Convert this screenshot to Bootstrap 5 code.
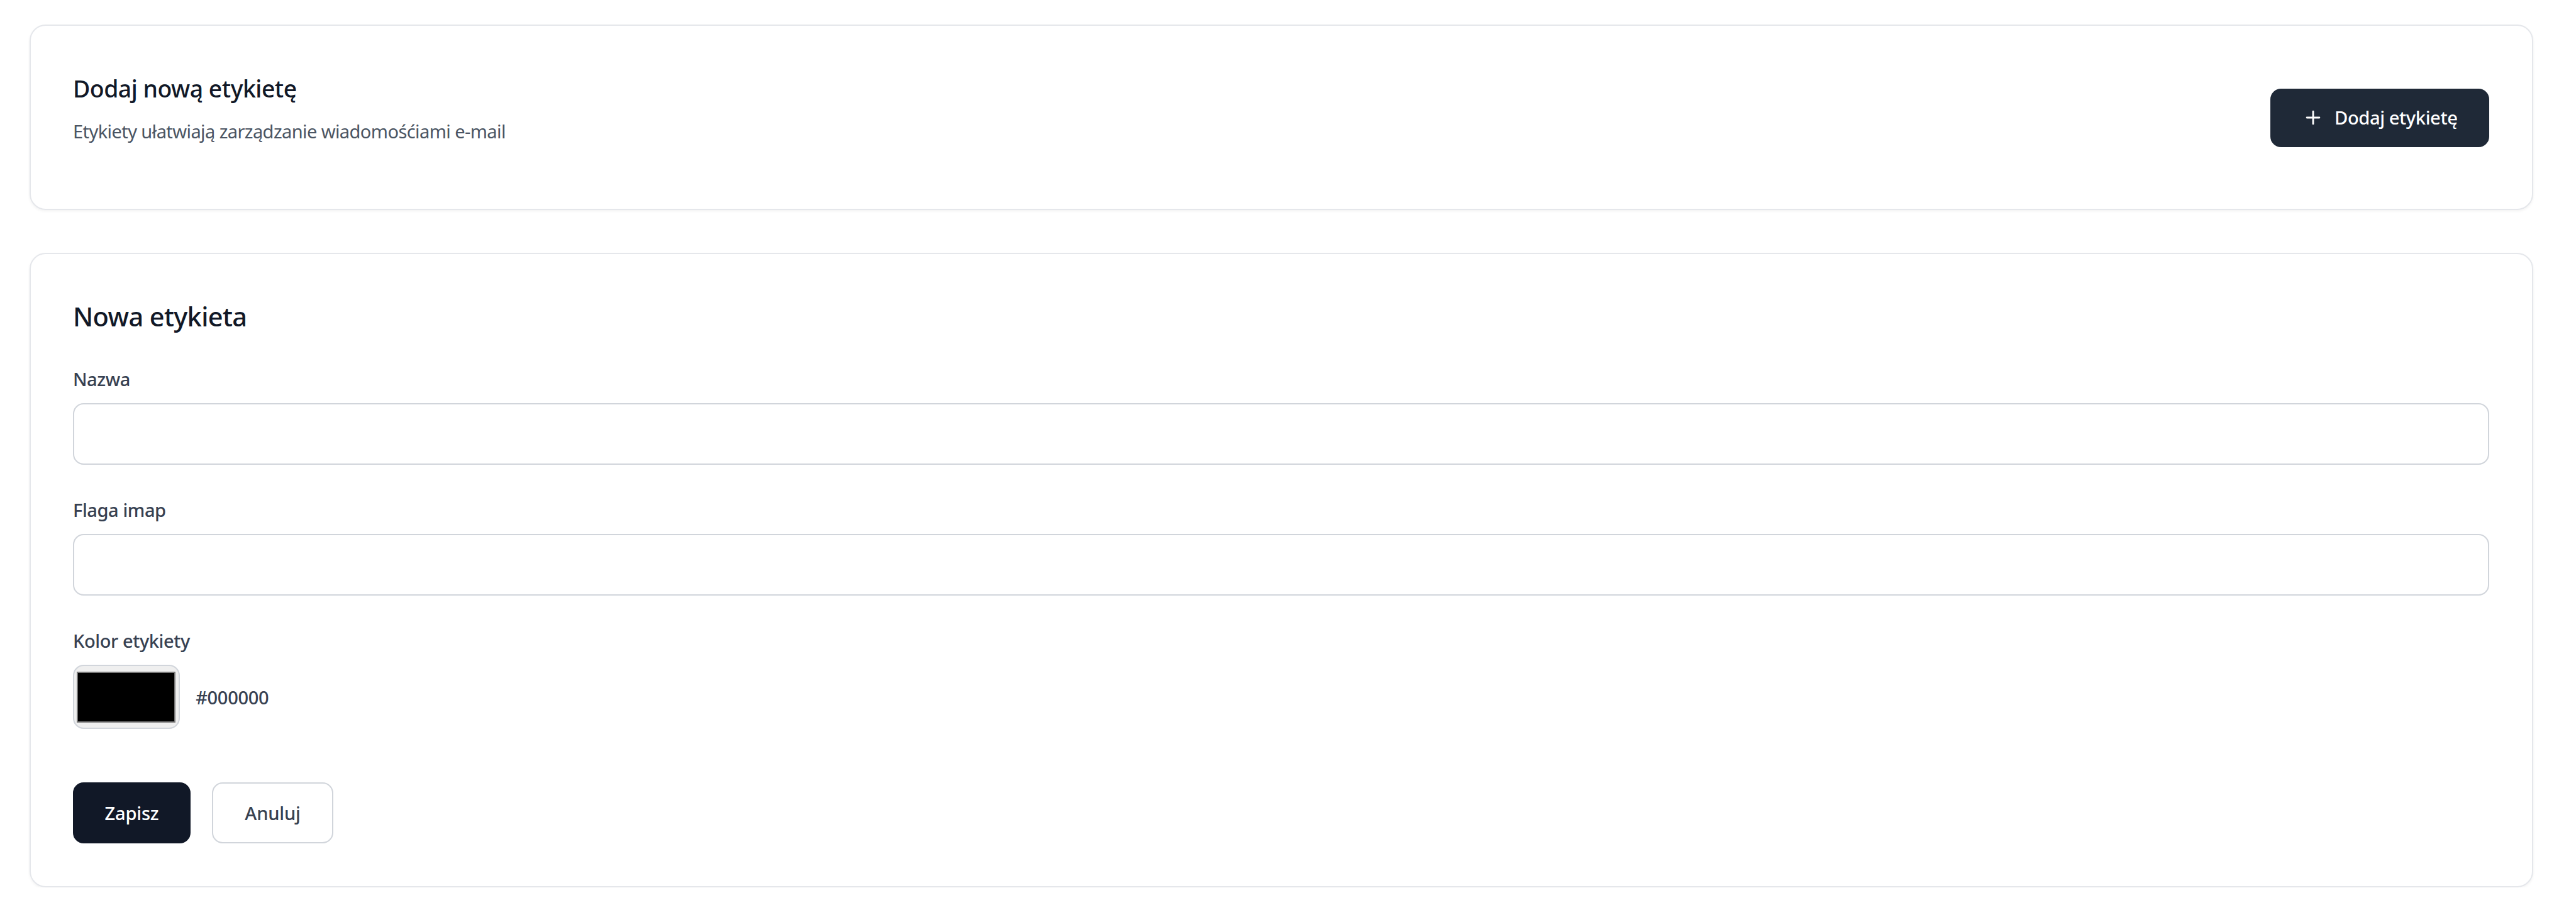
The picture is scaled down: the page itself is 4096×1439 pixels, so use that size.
<!DOCTYPE html>
<html lang="pl">
<head>
  <meta charset="UTF-8">
  <meta name="viewport" content="width=device-width, initial-scale=1">
  <title>Etykiety</title>
  <!-- Bootstrap 5 CDN -->
  <link href="https://cdn.jsdelivr.net/npm/bootstrap@5.3.3/dist/css/bootstrap.min.css" rel="stylesheet">
  <style>
    body {
      font-family: 'Segoe UI', 'Noto Sans', sans-serif;
      font-size: 29.1px;
      line-height: 42.4px;
      background: #fff;
      color: #374151;
      padding: 38.9px 67.9px 0 46.7px;
    }

    .panel {
      border: 2px solid #e5e7eb;
      border-radius: 25.5px;
      box-shadow: 0 2px 4px rgba(0, 0, 0, 0.05);
      padding: 0 68px 0 67.3px;
    }

    .panel-intro {
      height: 294.9px;
      padding-top: 70px;
      margin-bottom: 67.9px;
    }

    .panel-form {
      height: 1009.8px;
      padding-top: 70.7px;
    }

    .panel-title {
      font-size: 37.4px;
      line-height: 59.4px;
      font-weight: 500;
      letter-spacing: -0.5px;
      color: #111827;
      margin-bottom: 17.6px;
    }

    .panel-text {
      color: #4b5563;
      letter-spacing: -0.61px;
    }

    .form-title {
      font-size: 41.6px;
      line-height: 59.4px;
      font-weight: 500;
      letter-spacing: -0.65px;
      color: #111827;
      margin-bottom: 48.4px;
    }

    .form-label {
      font-weight: 500;
      letter-spacing: -0.45px;
      margin-bottom: 16.8px;
    }

    .field {
      margin-bottom: 51.2px;
    }

    .field .form-control {
      height: 97.6px;
      border: 2px solid #d1d5db;
      border-radius: 17px;
      font-size: 29.1px;
    }

    .color-box {
      width: 169.7px;
      height: 101.9px;
      padding: 8.6px 4.3px;
      border: 2px solid #d1d5db;
      border-radius: 17px;
      background: #efefef;
    }

    .color-swatch {
      background: #000;
      border: 2px solid #777;
    }

    .color-value {
      font-weight: 500;
      letter-spacing: -0.37px;
      margin-left: 25.5px;
      padding-top: 2px;
    }

    .btn {
      --bs-btn-font-size: 29.1px;
      --bs-btn-font-weight: 500;
      --bs-btn-line-height: 42.4px;
      --bs-btn-border-radius: 17px;
      --bs-btn-border-width: 2px;
      --bs-btn-padding-x: 0;
      --bs-btn-padding-y: 0;
      letter-spacing: -0.2px;
    }

    .btn-add {
      --bs-btn-color: #fff;
      --bs-btn-bg: #1f2937;
      --bs-btn-border-color: #1f2937;
      --bs-btn-hover-color: #fff;
      --bs-btn-hover-bg: #111827;
      width: 347.8px;
      height: 93.4px;
      margin-top: 29.9px;
      gap: 17px;
      letter-spacing: -0.4px;
    }

    .btn-save {
      --bs-btn-color: #fff;
      --bs-btn-bg: #111827;
      --bs-btn-border-color: #111827;
      --bs-btn-hover-color: #fff;
      --bs-btn-hover-bg: #1f2937;
      width: 187px;
      height: 97.4px;
    }

    .btn-cancel {
      --bs-btn-color: #374151;
      --bs-btn-bg: #fff;
      --bs-btn-border-color: #d1d5db;
      --bs-btn-hover-bg: #f9fafb;
      width: 193px;
      height: 97.4px;
    }

    .form-actions {
      gap: 34px;
      margin-top: 84.8px;
    }
  </style>
</head>
<body>

  <div class="panel panel-intro d-flex justify-content-between align-items-start">
    <div>
      <h2 class="panel-title">Dodaj nową etykietę</h2>
      <p class="panel-text mb-0">Etykiety ułatwiają zarządzanie wiadomośćiami e-mail</p>
    </div>
    <button type="button" class="btn btn-add d-flex align-items-center justify-content-center">
      <svg width="34" height="34" viewBox="0 0 24 24" fill="none" stroke="currentColor" stroke-width="2" stroke-linecap="round" stroke-linejoin="round"><path d="M5 12h14M12 5v14"/></svg>
      <span>Dodaj etykietę</span>
    </button>
  </div>

  <form class="panel panel-form" onsubmit="return false">
    <h3 class="form-title">Nowa etykieta</h3>

    <div class="field">
      <label for="name" class="form-label d-block">Nazwa</label>
      <input type="text" class="form-control" id="name">
    </div>

    <div class="field">
      <label for="flag" class="form-label d-block">Flaga imap</label>
      <input type="text" class="form-control" id="flag">
    </div>

    <div>
      <div class="form-label">Kolor etykiety</div>
      <div class="d-flex align-items-center">
        <div class="color-box"><div class="color-swatch h-100"></div></div>
        <span class="color-value">#000000</span>
      </div>
    </div>

    <div class="form-actions d-flex">
      <button type="submit" class="btn btn-save">Zapisz</button>
      <button type="button" class="btn btn-cancel">Anuluj</button>
    </div>
  </form>

  <!-- Bootstrap 5 JS -->
  <script src="https://cdn.jsdelivr.net/npm/bootstrap@5.3.3/dist/js/bootstrap.bundle.min.js"></script>
</body>
</html>
